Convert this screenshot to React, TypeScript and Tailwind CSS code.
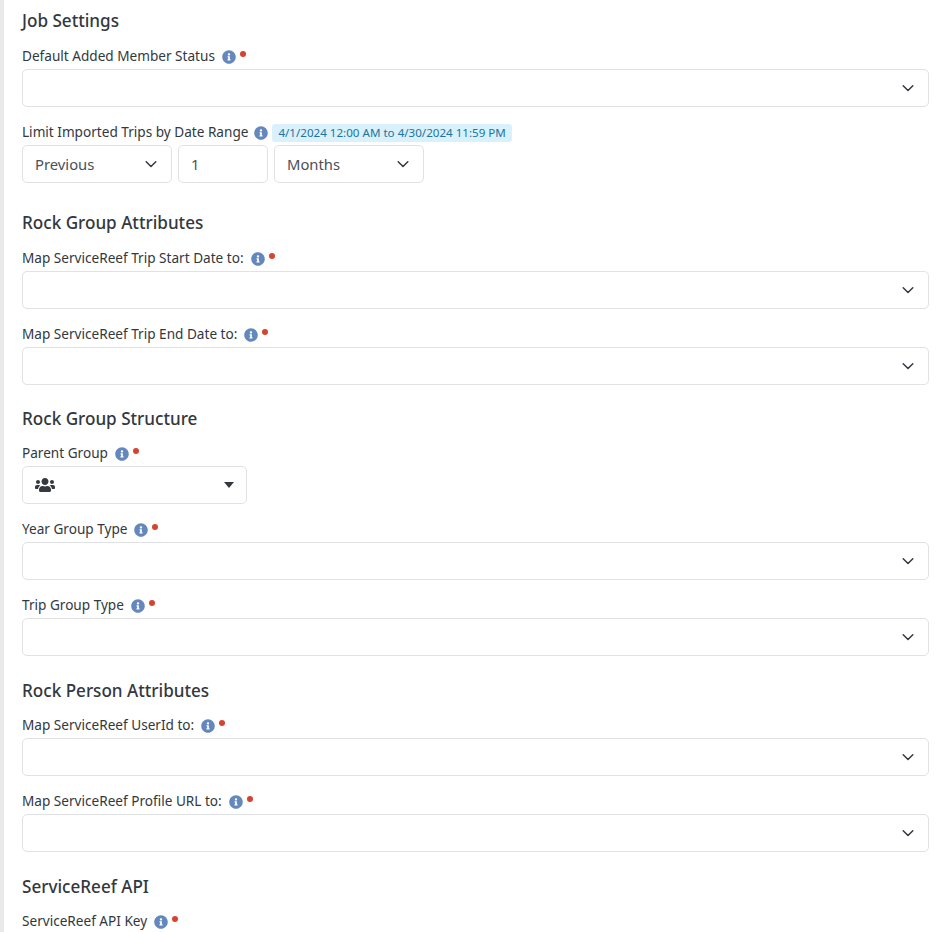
import { FaInfoCircle, FaUsers } from 'react-icons/fa';

function Chevron() {
  return (
    <svg viewBox="0 0 16 16" className="w-4 h-4 shrink-0 text-[#343a40]" fill="none" stroke="currentColor" strokeWidth="1.5" strokeLinecap="round" strokeLinejoin="round">
      <path d="M3.2 5.7l4.8 4.8 4.8-4.8" />
    </svg>
  );
}

function Label({ text }: { text: string }) {
  return (
    <div className="flex items-center h-[23px] pb-[2px] text-[13.6px] text-[#32383e]">
      <span>{text}</span>
      <FaInfoCircle size={14} className="shrink-0 ml-[7px] text-[#6488bd]" />
      <span className="w-[6px] h-[6px] rounded-full bg-[#d4442e] ml-[4px] mb-[6px]" />
    </div>
  );
}

function Select() {
  return (
    <div className="flex items-center justify-end h-[38px] pr-[12px] bg-white border border-[#e0e2e4] rounded-[5px]">
      <Chevron />
    </div>
  );
}

function Field({ text }: { text: string }) {
  return (
    <div className="mb-[15px]">
      <Label text={text} />
      <Select />
    </div>
  );
}

function Heading({ children, tight = false }: { children: string; tight?: boolean }) {
  return (
    <h3 className={`${tight ? 'pt-[5px]' : 'pt-[6px]'} h-[32px] mb-[11px] text-[17.1px] leading-[26px] font-medium text-[#32383e]`}>
      {children}
    </h3>
  );
}

function ValueSelect({ value }: { value: string }) {
  return (
    <div className="flex items-center justify-between w-[150px] h-[38px] pl-[12px] pr-[12px] border border-[#e0e2e4] rounded-[5px] text-[14.8px] text-[#4a5058]">
      <span>{value}</span>
      <Chevron />
    </div>
  );
}

export default function App() {
  return (
    <div className="h-[932px] overflow-hidden bg-white border-l-[4px] border-[#e9e9e9] pl-[18px] pr-[16px] pt-[3px] font-['Noto_Sans',sans-serif]">
      <Heading tight>Job Settings</Heading>
      <Field text="Default Added Member Status" />

      <div className="flex items-center h-[23px] pb-[2px] text-[13.6px] text-[#32383e]">
        <span>Limit Imported Trips by Date Range</span>
        <FaInfoCircle size={14} className="shrink-0 ml-[6px] text-[#6488bd]" />
        <span className="ml-[4px] px-[6px] h-[18px] leading-[18px] rounded-[3px] bg-[#d9f1fd] text-[11.6px] text-[#20749c]">
          4/1/2024 12:00 AM to 4/30/2024 11:59 PM
        </span>
      </div>
      <div className="flex gap-[6px] mb-[22px]">
        <ValueSelect value="Previous" />
        <div className="flex items-center w-[90px] h-[38px] pl-[12px] border border-[#e0e2e4] rounded-[5px] text-[14.8px] text-[#4a5058]">1</div>
        <ValueSelect value="Months" />
      </div>

      <Heading tight>Rock Group Attributes</Heading>
      <Field text="Map ServiceReef Trip Start Date to:" />
      <Field text="Map ServiceReef Trip End Date to:" />

      <Heading>Rock Group Structure</Heading>
      <div className="mb-[15px]">
        <Label text="Parent Group" />
        <div className="flex items-center justify-between w-[225px] h-[38px] pl-[12px] pr-[12px] border border-[#e0e2e4] rounded-[5px] text-[#343a40]">
          <FaUsers size={20} />
          <span className="w-0 h-0 border-x-[5px] border-x-transparent border-t-[6px] border-t-[#343a40]" />
        </div>
      </div>
      <Field text="Year Group Type" />
      <Field text="Trip Group Type" />

      <div className="pt-[1px]">
        <Heading>Rock Person Attributes</Heading>
        <Field text="Map ServiceReef UserId to:" />
        <Field text="Map ServiceReef Profile URL to:" />
      </div>

      <div className="pt-[1px]">
        <Heading>ServiceReef API</Heading>
        <Label text="ServiceReef API Key" />
      </div>
    </div>
  );
}
